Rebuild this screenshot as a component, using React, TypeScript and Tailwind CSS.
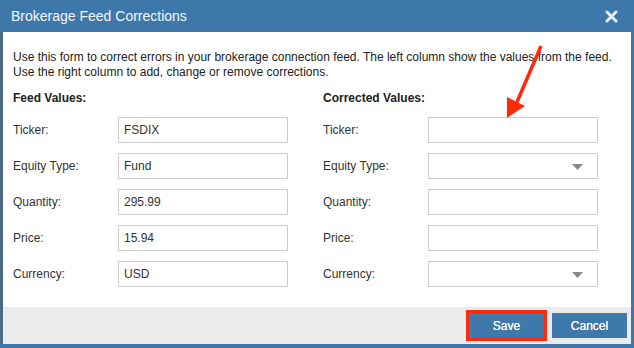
import React from "react";

const font = { fontFamily: '"Liberation Sans", Arial, sans-serif' };

function Field({ label, value, select }: { label: string; value?: string; select?: boolean }) {
  return (
    <div className="flex items-center h-[26px] mb-[10px]">
      <div className="w-[105px] text-[12px] text-[#333]">{label}</div>
      <div className="relative w-[170px] h-[26px] border border-[#cccccc] bg-white flex items-center pl-[5px] text-[12px] text-[#333]">
        {value}
        {select && (
          <svg className="absolute right-[14px] top-[10px]" width="11" height="6" viewBox="0 0 11 6">
            <path d="M0 0 L11 0 L5.5 6 Z" fill="#888" />
          </svg>
        )}
      </div>
    </div>
  );
}

export default function App() {
  return (
    <div style={font} className="relative w-[634px] h-[348px] bg-[#3e78ab] flex flex-col overflow-hidden">
      <div className="h-[32px] shrink-0 flex items-center justify-between pl-[11px] pr-[16px]">
        <span className="text-[14px] text-[#f4f7fb]">Brokerage Feed Corrections</span>
        <svg width="13" height="13" viewBox="0 0 13 13">
          <path d="M2 2 L11 11 M11 2 L2 11" stroke="#e9eef5" strokeWidth="3" strokeLinecap="round" />
        </svg>
      </div>
      <div className="flex-1 mr-[3px] mb-[4px] border-l-[3px] border-[#4a6a88] bg-white flex flex-col">
        <div className="flex-1 pl-[10px] pt-[18px]">
          <p className="text-[12px] leading-[15px] text-[#222]">
            Use this form to correct errors in your brokerage connection feed. The left column show the values from the feed.
            <br />
            Use the right column to add, change or remove corrections.
          </p>
          <div className="flex mt-[11px]">
            <div className="w-[310px]">
              <div className="text-[12px] leading-[15px] font-bold text-[#222] mb-[11px]">Feed Values:</div>
              <Field label="Ticker:" value="FSDIX" />
              <Field label="Equity Type:" value="Fund" />
              <Field label="Quantity:" value="295.99" />
              <Field label="Price:" value="15.94" />
              <Field label="Currency:" value="USD" />
            </div>
            <div>
              <div className="text-[12px] leading-[15px] font-bold text-[#222] mb-[11px]">Corrected Values:</div>
              <Field label="Ticker:" />
              <Field label="Equity Type:" select />
              <Field label="Quantity:" />
              <Field label="Price:" />
              <Field label="Currency:" select />
            </div>
          </div>
        </div>
        <div className="h-[37px] shrink-0 bg-[#ebebeb] flex items-start justify-end gap-[8px] pt-[6px] pr-[4px]">
          <button className="w-[75px] h-[25px] bg-[#3f79ab] text-white text-[12px] [text-shadow:0_0_0.4px_#fff] outline-[3px] outline-solid outline-[#ff2a0a]">
            Save
          </button>
          <button className="w-[75px] h-[25px] bg-[#3f79ab] text-white text-[12px] [text-shadow:0_0_0.4px_#fff]">
            Cancel
          </button>
        </div>
      </div>
      <svg className="absolute left-0 top-0 pointer-events-none" width="634" height="348">
        <line x1="541" y1="46" x2="517" y2="102" stroke="#ff2a0a" strokeWidth="3.5" />
        <path d="M507 118 L507 97 L525 106 Z" fill="#ff2a0a" />
      </svg>
    </div>
  );
}
